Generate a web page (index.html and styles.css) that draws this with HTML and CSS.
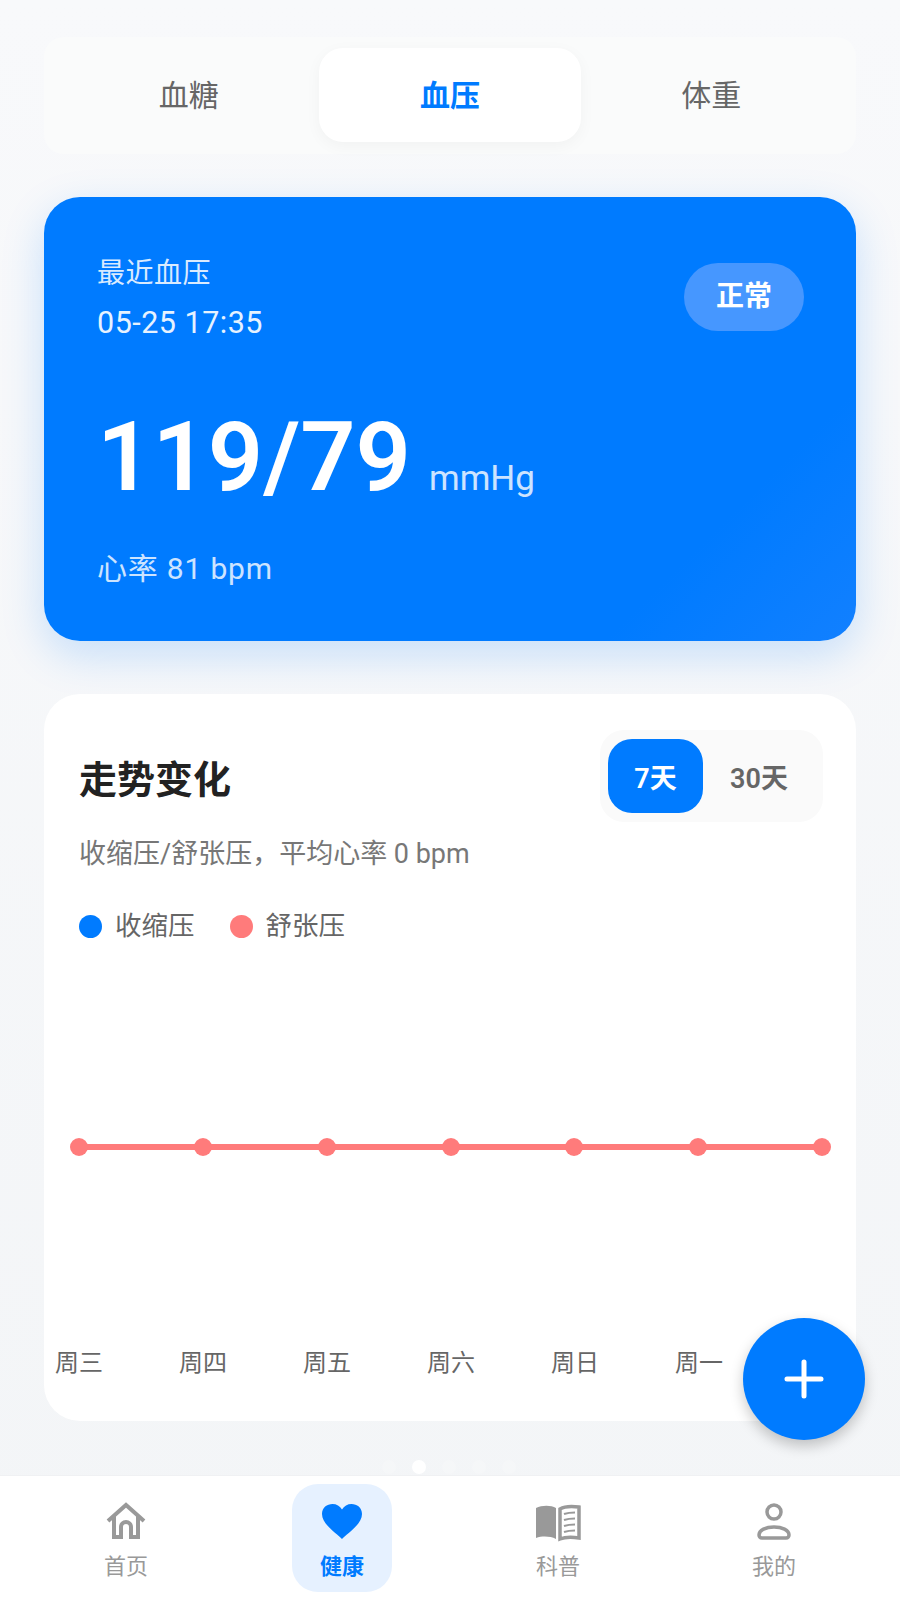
FILE: index.html
```html
<!DOCTYPE html>
<html lang="zh-CN">
<head>
    <meta charset="UTF-8">
    <meta name="viewport" content="width=device-width, initial-scale=1.0">
    <title>健康</title>
    <link rel="stylesheet" href="styles.css">
</head>
<body>
    <main class="page">
        <div class="tabs">
            <div class="tab">血糖</div>
            <div class="tab active">血压</div>
            <div class="tab">体重</div>
        </div>

        <section class="latest-card">
            <div class="latest-top">
                <div>
                    <div class="latest-label">最近血压</div>
                    <div class="latest-time">05-25 17:35</div>
                </div>
                <span class="status">正常</span>
            </div>
            <div class="reading">
                <span class="reading-value">119/79</span>
                <span class="reading-unit">mmHg</span>
            </div>
            <div class="heart-rate">心率 81 bpm</div>
        </section>

        <section class="trend-card">
            <div class="trend-head">
                <h2>走势变化</h2>
                <div class="range">
                    <span class="range-item selected">7天</span>
                    <span class="range-item">30天</span>
                </div>
            </div>
            <p class="trend-sub">收缩压/舒张压，平均心率 0 bpm</p>
            <div class="legend">
                <span class="legend-item"><i class="dot dot-blue"></i>收缩压</span>
                <span class="legend-item"><i class="dot dot-red"></i>舒张压</span>
            </div>
            <svg class="chart" width="775" height="300" viewBox="0 0 775 300">
                <line x1="16" y1="152" x2="759" y2="152" stroke="#ff7b7b" stroke-width="6"/>
                <circle cx="16" cy="152" r="9" fill="#ff7b7b"/>
                <circle cx="140" cy="152" r="9" fill="#ff7b7b"/>
                <circle cx="264" cy="152" r="9" fill="#ff7b7b"/>
                <circle cx="388" cy="152" r="9" fill="#ff7b7b"/>
                <circle cx="511" cy="152" r="9" fill="#ff7b7b"/>
                <circle cx="635" cy="152" r="9" fill="#ff7b7b"/>
                <circle cx="759" cy="152" r="9" fill="#ff7b7b"/>
            </svg>
            <div class="axis">
                <span>周三</span>
                <span>周四</span>
                <span>周五</span>
                <span>周六</span>
                <span>周日</span>
                <span>周一</span>
            </div>
        </section>

        <div class="pager">
            <i></i><i class="current"></i><i></i><i></i><i></i>
        </div>
        <button class="fab" type="button" aria-label="添加">
            <svg width="40" height="40" viewBox="0 0 40 40">
                <path d="M20 3v34M3 20h34" stroke="#fff" stroke-width="5" stroke-linecap="round" fill="none"/>
            </svg>
        </button>
    </main>

    <nav class="bottom-nav">
        <a class="nav-item">
            <svg width="42" height="42" viewBox="0 0 42 42" fill="none" stroke="#999" stroke-width="4">
                <path d="M3 20 21 4l18 16"/>
                <path d="M9 15v21h7V26a5 5 0 0 1 10 0v10h7V15"/>
            </svg>
            <span>首页</span>
        </a>
        <a class="nav-item active">
            <svg width="42" height="42" viewBox="0 0 42 42">
                <path d="M21 38C17 33 1 24 1 13 1 6.500 6 3 11.500 3c4 0 7.500 2 9.500 5.500C23 5 26.500 3 30.500 3 36 3 41 6.500 41 13c0 11-16 20-20 25z" fill="#007bff"/>
            </svg>
            <span>健康</span>
        </a>
        <a class="nav-item">
            <svg width="46" height="42" viewBox="0 0 46 42" fill="none">
                <path d="M1 7c6-3 15-3 20 0v31c-6-3-14-3-20-1z" fill="#999"/>
                <path d="M25 8c5-3 12-3 19-2v31c-7-1-14-1-19 1z" stroke="#999" stroke-width="3.500"/>
                <path d="M29 13c3-1 7-1.500 11-1.500M29 19c3-1 7-1.500 11-1.500M29 25c3-1 7-1.500 11-1.500M29 31c3-1 7-1.500 11-1.500" stroke="#999" stroke-width="2.200"/>
            </svg>
            <span>科普</span>
        </a>
        <a class="nav-item">
            <svg width="42" height="42" viewBox="0 0 42 42" fill="none" stroke="#999" stroke-width="3.500">
                <circle cx="21" cy="11" r="7"/>
                <path d="M9 37h24c2 0 3-1.500 3-3 0-5-7-8-15-8s-15 3-15 8c0 1.500 1 3 3 3z"/>
            </svg>
            <span>我的</span>
        </a>
    </nav>
</body>
</html>
```

FILE: styles.css
```css
* {
    box-sizing: border-box;
}

html, body {
    margin: 0;
    height: 100%;
}

body {
    width: 900px;
    height: 1600px;
    overflow: hidden;
    display: flex;
    flex-direction: column;
    font-family: Roboto, "Noto Sans CJK SC", sans-serif;
    background: linear-gradient(#f8f9fb, #f3f5f7);
}

.page {
    position: relative;
    flex: 1;
    padding: 37px 44px 0;
}

/* top tabs */
.tabs {
    display: flex;
    height: 117px;
    padding: 11px 14px 12px;
    background: #fafbfb;
    border-radius: 20px;
}

.tab {
    flex: 1;
    display: flex;
    align-items: center;
    justify-content: center;
    padding-bottom: 5px;
    border-radius: 24px;
    font-size: 30px;
    color: #666;
}

.tab.active {
    background: #fff;
    color: #007bff;
    font-weight: 700;
    box-shadow: 0 4px 16px rgba(0, 0, 0, 0.04);
}

/* latest reading */
.latest-card {
    height: 444px;
    margin-top: 43px;
    padding: 56px 52px 0 53px;
    border-radius: 36px;
    background: linear-gradient(135deg, #007bff 80%, #1280ff);
    color: #fff;
    box-shadow: 0 14px 44px rgba(0, 123, 255, 0.2);
}

.latest-top {
    display: flex;
    justify-content: space-between;
    align-items: center;
}

.latest-label {
    font-size: 28px;
    line-height: 42px;
    letter-spacing: 0.5px;
    opacity: 0.85;
}

.latest-time {
    margin-top: 7px;
    font-size: 30.500px;
    line-height: 42px;
    letter-spacing: 0.5px;
    opacity: 0.9;
}

.status {
    width: 120px;
    height: 68px;
    margin-bottom: 4px;
    border-radius: 34px;
    background: #4697ff;
    font-size: 28px;
    font-weight: 700;
    line-height: 68px;
    text-align: center;
}

.reading {
    display: flex;
    align-items: baseline;
    margin-top: 53px;
    line-height: 120px;
}

.reading-value {
    font-size: 97px;
    font-weight: 600;
}

.reading-unit {
    margin-left: 18px;
    font-size: 35px;
    opacity: 0.8;
}

.heart-rate {
    margin-top: 9px;
    font-size: 30px;
    line-height: 42px;
    letter-spacing: 0.8px;
    opacity: 0.8;
}

/* trend chart */
.trend-card {
    height: 727px;
    margin-top: 53px;
    padding: 36px 35px 0;
    border-radius: 36px;
    background: #fff;
}

.trend-head {
    display: flex;
    justify-content: space-between;
    align-items: center;
}

.trend-head h2 {
    margin: 0;
    padding-top: 1px;
    font-size: 38px;
    font-weight: 700;
    color: #222;
}

.range {
    display: flex;
    height: 92px;
    margin-right: -2px;
    padding: 9px 8px;
    border-radius: 24px;
    background: #fafafa;
}

.range-item {
    display: flex;
    align-items: center;
    justify-content: center;
    width: 112px;
    border-radius: 24px;
    font-size: 27px;
    font-weight: 600;
    color: #666;
}

.range-item.selected {
    width: 95px;
    background: #007bff;
    color: #fff;
}

.trend-sub {
    margin: 12px 0 0;
    font-size: 27px;
    line-height: 40px;
    color: #777;
}

.legend {
    display: flex;
    gap: 35px;
    margin-top: 32px;
    line-height: 40px;
}

.legend-item {
    display: flex;
    align-items: center;
    gap: 13px;
    font-size: 26.500px;
    color: #666;
}

.dot {
    width: 23px;
    height: 23px;
    border-radius: 50%;
}

.dot-blue {
    background: #007bff;
}

.dot-red {
    background: #ff7b7b;
}

.chart {
    display: block;
    margin: 49px 0 0 -16px;
}

.axis {
    display: grid;
    grid-template-columns: repeat(7, 124px);
    margin: 50px 0 0 -62px;
    font-size: 24px;
    line-height: 36px;
    color: #666;
    text-align: center;
}

/* floating things */
.fab {
    position: absolute;
    left: 743px;
    top: 1318px;
    width: 122px;
    height: 122px;
    display: flex;
    align-items: center;
    justify-content: center;
    padding: 0;
    border: none;
    border-radius: 50%;
    background: #007bff;
    box-shadow: 0 6px 14px rgba(0, 0, 0, 0.22);
}

.pager {
    position: absolute;
    left: 382px;
    top: 1460px;
    display: flex;
    align-items: center;
    gap: 16px;
}

.pager i {
    width: 14px;
    height: 14px;
    border-radius: 50%;
    background: rgba(255, 255, 255, 0.2);
}

.pager i.current {
    background: #fff;
}

/* bottom nav */
.bottom-nav {
    display: grid;
    grid-template-columns: repeat(4, 1fr);
    height: 125px;
    padding: 0 18px;
    background: #fff;
    border-top: 1px solid #f0f1f3;
}

.nav-item {
    display: flex;
    flex-direction: column;
    align-items: center;
    font-size: 22px;
    color: #999;
}

.nav-item svg {
    margin-top: 25px;
}

.nav-item span {
    margin-top: 8px;
    line-height: 32px;
}

.nav-item.active {
    justify-self: center;
    width: 100px;
    height: 108px;
    margin-top: 8px;
    border-radius: 26px;
    background: #e6f1ff;
    color: #007bff;
    font-weight: 700;
}

.nav-item.active svg {
    margin-top: 17px;
}
```
